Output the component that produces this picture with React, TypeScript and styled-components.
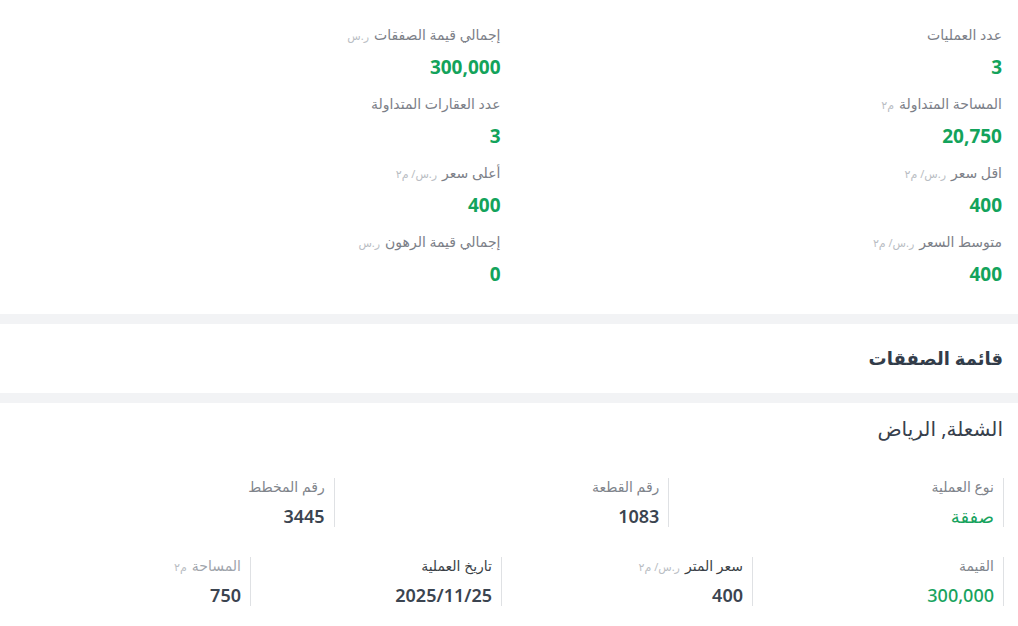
import React from "react";
import styled, { createGlobalStyle } from "styled-components";

const GlobalStyle = createGlobalStyle`
  html, body {
    margin: 0;
    padding: 0;
    background: #ffffff;
  }
  body {
    font-family: "Noto Sans", "DejaVu Sans", sans-serif;
  }
`;

type Tone = "green" | "dark";

interface Stat {
  label: string;
  unit?: string;
  value: string;
}

interface Detail {
  label: string;
  unit?: string;
  value: string;
  tone: Tone;
  strong?: boolean;
  dim?: boolean;
}

const stats: Stat[] = [
  { label: "عدد العمليات", value: "3" },
  { label: "إجمالي قيمة الصفقات", unit: "ر.س", value: "300,000" },
  { label: "المساحة المتداولة", unit: "م٢", value: "20,750" },
  { label: "عدد العقارات المتداولة", value: "3" },
  { label: "اقل سعر", unit: "ر.س/ م٢", value: "400" },
  { label: "أعلى سعر", unit: "ر.س/ م٢", value: "400" },
  { label: "متوسط السعر", unit: "ر.س/ م٢", value: "400" },
  { label: "إجمالي قيمة الرهون", unit: "ر.س", value: "0" },
];

const firstRow: Detail[] = [
  { label: "نوع العملية", value: "صفقة", tone: "green" },
  { label: "رقم القطعة", value: "1083", tone: "dark" },
  { label: "رقم المخطط", value: "3445", tone: "dark" },
];

const secondRow: Detail[] = [
  { label: "القيمة", value: "300,000", tone: "green" },
  { label: "سعر المتر", unit: "ر.س/ م٢", value: "400", tone: "dark", strong: true },
  { label: "تاريخ العملية", value: "2025/11/25", tone: "dark", strong: true },
  { label: "المساحة", unit: "م٢", value: "750", tone: "dark", dim: true },
];

function DetailGrid({ items }: { items: Detail[] }) {
  return (
    <DetailRow cols={items.length}>
      {items.map((d) => (
        <DetailCell key={d.label}>
          <DetailLabel strong={d.strong} dim={d.dim}>
            <span>{d.label}</span>
            {d.unit && <Unit>{d.unit}</Unit>}
          </DetailLabel>
          <DetailValue tone={d.tone}>{d.value}</DetailValue>
        </DetailCell>
      ))}
    </DetailRow>
  );
}

function App() {
  return (
    <Page>
      <GlobalStyle />
      <Summary>
        {stats.map((s) => (
          <StatItem key={s.label}>
            <StatLabel>
              <span>{s.label}</span>
              {s.unit && <Unit>{s.unit}</Unit>}
            </StatLabel>
            <StatValue>{s.value}</StatValue>
          </StatItem>
        ))}
      </Summary>
      <Divider />
      <SectionHeader>
        <SectionTitle>قائمة الصفقات</SectionTitle>
      </SectionHeader>
      <Divider />
      <DealCard>
        <DealTitle>الشعلة, الرياض</DealTitle>
        <DetailGrid items={firstRow} />
        <DetailGrid items={secondRow} />
      </DealCard>
    </Page>
  );
}

export default App;

const Page = styled.div`
  direction: rtl;
  width: 1018px;
  background: #ffffff;
`;

const Summary = styled.div`
  display: grid;
  grid-template-columns: 1fr 1fr;
  row-gap: 14px;
  padding: 24px 15px 28px 0;
`;

const StatItem = styled.div`
  display: flex;
  flex-direction: column;
  gap: 9px;
  padding-right: 1px;
`;

const StatLabel = styled.div`
  display: flex;
  align-items: baseline;
  gap: 5px;
  height: 22px;
  font-size: 14px;
  line-height: 22px;
  color: #7c8088;
`;

const Unit = styled.span`
  font-size: 11px;
  color: #b9bdc3;
`;

const StatValue = styled.div`
  height: 24px;
  font-size: 19px;
  line-height: 24px;
  font-weight: 700;
  color: #13a35b;
`;

const Divider = styled.div`
  height: 10px;
  background: #f2f3f5;
`;

const SectionHeader = styled.div`
  display: flex;
  align-items: center;
  height: 69px;
  padding-right: 15px;
`;

const SectionTitle = styled.h2`
  margin: 0 0 2px;
  font-size: 18px;
  line-height: 26px;
  font-weight: 700;
  color: #323c49;
`;

const DealCard = styled.div`
  padding: 13px 14px 0 0;
`;

const DealTitle = styled.div`
  height: 26px;
  font-size: 20px;
  line-height: 26px;
  color: #37404c;
  padding-right: 1px;
  margin-bottom: 36px;
`;

const DetailRow = styled.div<{ cols: number }>`
  display: grid;
  grid-template-columns: repeat(${({ cols }) => cols}, 1fr);
  margin-bottom: 30px;
`;

const DetailCell = styled.div`
  display: flex;
  flex-direction: column;
  gap: 9px;
  border-right: 1px solid #dfe1e4;
  padding-right: 9px;
`;

const DetailLabel = styled.div<{ strong?: boolean; dim?: boolean }>`
  display: flex;
  align-items: baseline;
  gap: 5px;
  height: 18px;
  font-size: 14px;
  line-height: 18px;
  color: ${({ strong, dim }) => (strong ? "#3a3f46" : dim ? "#a0a4ab" : "#80848b")};
`;

const DetailValue = styled.div<{ tone: Tone }>`
  height: 22px;
  font-size: 18px;
  line-height: 22px;
  font-weight: ${({ tone }) => (tone === "green" ? 500 : 600)};
  color: ${({ tone }) => (tone === "green" ? "#18a35e" : "#3b4450")};
`;
